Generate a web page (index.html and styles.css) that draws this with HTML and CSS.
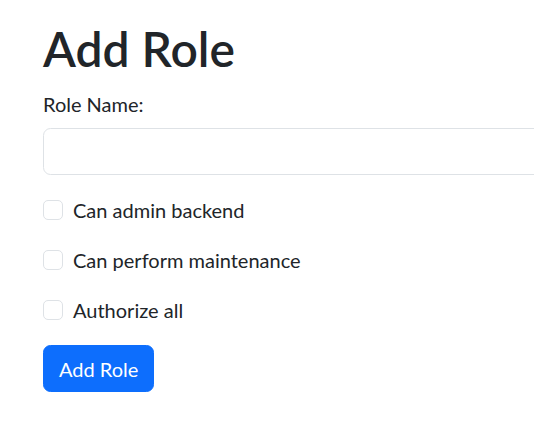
FILE: index.html
```html
<!DOCTYPE html>
<html lang="en">
<head>
<meta charset="utf-8">
<title>Add Role</title>
<link rel="stylesheet" href="styles.css">
</head>
<body>
<main class="page">
  <h1 class="title">Add Role</h1>
  <form class="form">
    <label class="label" for="role-name">Role Name:</label>
    <input class="input" id="role-name" type="text">
    <div class="check"><input class="check-box" type="checkbox" id="c1"><label for="c1">Can admin backend</label></div>
    <div class="check"><input class="check-box" type="checkbox" id="c2"><label for="c2">Can perform maintenance</label></div>
    <div class="check"><input class="check-box" type="checkbox" id="c3"><label for="c3">Authorize all</label></div>
    <button class="btn" type="button">Add Role</button>
  </form>
</main>
</body>
</html>
```

FILE: styles.css
```css
html, body {
  margin: 0;
  padding: 0;
  overflow: hidden;
  background: #fff;
}
body {
  font-family: Lato, "Noto Sans", sans-serif;
  font-size: 20px;
  line-height: 30px;
  color: #212529;
}
.page {
  padding: 18px 0 0 43px;
}
.title {
  margin: 0 0 10px;
  padding-top: 1px;
  height: 59px;
  font-size: 48px;
  line-height: 60px;
  font-weight: 600;
}
.form {
  display: flex;
  flex-direction: column;
  align-items: flex-start;
}
.label {
  margin-bottom: 10px;
  line-height: 30px;
  padding-top: 1px;
  height: 29px;
}
.input {
  box-sizing: border-box;
  width: 620px;
  height: 47px;
  margin: 0 0 20px;
  padding: 7.5px 15px;
  border: 1px solid #dee2e6;
  border-radius: 7.5px;
  font: inherit;
}
.check {
  display: flex;
  align-items: flex-start;
  gap: 10px;
  min-height: 30px;
  margin-bottom: 20px;
}
.check-box {
  appearance: none;
  margin: 5px 0 0;
  width: 20px;
  height: 20px;
  border: 1px solid #dee2e6;
  border-radius: 5px;
  background: #fff;
}
.btn {
  height: 47px;
  padding: 7.5px 15px;
  border: 1px solid #0d6efd;
  border-radius: 7.5px;
  background: #0d6efd;
  color: #fff;
  font: inherit;
  line-height: 30px;
}
```
